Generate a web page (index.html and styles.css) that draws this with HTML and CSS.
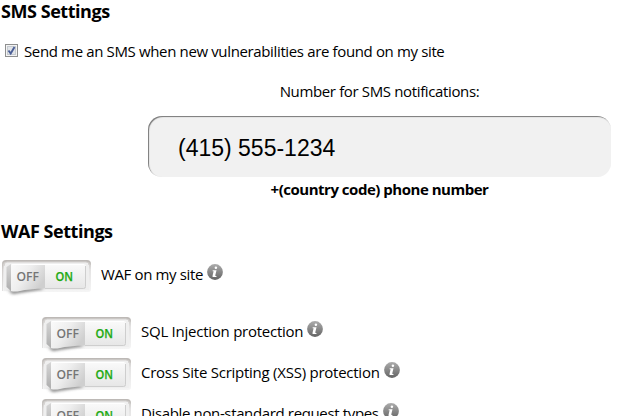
FILE: index.html
```html
<!DOCTYPE html>
<html lang="en">
<head>
<meta charset="utf-8">
<title>Settings</title>
<link rel="stylesheet" href="styles.css">
</head>
<body>
<svg class="defs" width="0" height="0" aria-hidden="true">
  <defs>
    <linearGradient id="frame" x1="0" y1="0" x2="0" y2="1"><stop offset="0" stop-color="#bcb8b5"/><stop offset=".12" stop-color="#d0cecc"/><stop offset=".3" stop-color="#e4e3e3"/><stop offset="1" stop-color="#f5f5f5"/></linearGradient>
    <linearGradient id="edge" x1="0" y1="0" x2="0" y2="32" gradientUnits="userSpaceOnUse"><stop offset="0" stop-color="#bab6b3"/><stop offset=".3" stop-color="#d2cfcd"/><stop offset="1" stop-color="#e2e2e2"/></linearGradient>
    <linearGradient id="side" x1="0" y1="0" x2="0" y2="1"><stop offset="0" stop-color="#d6d6d6"/><stop offset="1" stop-color="#adadad"/></linearGradient>
    <linearGradient id="off" x1="0" y1="0" x2="1" y2=".55"><stop offset="0" stop-color="#fbfbfb"/><stop offset=".5" stop-color="#eeeeee"/><stop offset="1" stop-color="#cfcfcf"/></linearGradient>
    <linearGradient id="on" x1="0" y1="0" x2="0" y2="1"><stop offset="0" stop-color="#fafafa"/><stop offset="1" stop-color="#e6e6e6"/></linearGradient>
    <linearGradient id="ball" x1="0" y1="0" x2="0" y2="1"><stop offset="0" stop-color="#acacac"/><stop offset="1" stop-color="#646464"/></linearGradient>
    <filter id="soft" x="-30%" y="-100%" width="160%" height="300%"><feGaussianBlur stdDeviation="1.7"/></filter>
    <symbol id="toggle" viewBox="0 0 92 40">
      <path d="M2 31V4a4 4 0 0 1 4-4h81a4 4 0 0 1 4 4v25a3 3 0 0 1-3 3H45L12 32z" fill="url(#frame)"/>
      <path d="M4 31V5q0-3 3-3h79q3 0 3 3v25H44L12 31z" fill="#efefef"/>
      <path d="M2.500 31V4.500Q2.500 1 6 1h81q3.500 0 3.500 3.500" fill="none" stroke="url(#edge)"/>
      <path d="M4 6q0-4 3-4h79q3 0 3 3" fill="none" stroke="#d3d0ce"/>
      <path d="M8 31l5 3 31-5-5-2z" fill="#666" opacity=".8" filter="url(#soft)"/>
      <path d="M6.500 7L11 4v27l-4.500-4z" fill="url(#side)"/>
      <path d="M11 5q0-1 1-1h33v24.500Q28 29 20 31q-5 1-9 0z" fill="url(#off)"/>
      <path d="M45 4h39q2 0 2 2v21q0 2-2 2H45z" fill="url(#on)"/>
      <path d="M45 28.500h38.500q2 0 2-2V6" fill="none" stroke="#cecece"/>
      <path d="M12 4.500h72" stroke="#fff"/>
      <text x="16.500" y="21" class="off-text" textLength="22.500" lengthAdjust="spacingAndGlyphs">OFF</text>
      <text x="55.500" y="21" class="on-text" textLength="17.500" lengthAdjust="spacingAndGlyphs">ON</text>
    </symbol>
    <symbol id="info" viewBox="0 0 16 16">
      <circle cx="8" cy="8" r="7.900" fill="url(#ball)"/>
      <circle cx="8.900" cy="3.700" r="1.250" fill="#fff"/>
      <path d="M5.700 6.300h3.800L8.300 11.300q-.1.600.4.600h.9l-.3 1H6q-.7 0-.5-.9l1.100-4.700h-1z" fill="#fff"/>
    </symbol>
  </defs>
</svg>
<main class="page">
  <h2 class="heading heading-sms">SMS Settings</h2>
  <label class="check-row">
    <svg class="box" viewBox="0 0 13 13"><rect x=".5" y=".5" width="12" height="12" fill="#f4f4f4" stroke="#8e8f8f"/><rect x="2.500" y="2.500" width="8" height="8" fill="#e1e4e8" stroke="#c5cad0"/><path d="M3.500 6.500l2.200 3L9.500 3" fill="none" stroke="#4b5f97" stroke-width="1.900"/></svg>
    <span>Send me an SMS when new vulnerabilities are found on my site</span>
  </label>
  <section class="phone">
    <span class="phone-label">Number for SMS notifications:</span>
    <div class="field">(415) 555-1234</div>
    <strong class="hint">+(country code) phone number</strong>
  </section>
  <h2 class="heading heading-waf">WAF Settings</h2>
  <div class="row"><svg class="toggle"><use href="#toggle"/></svg><span>WAF on my site</span><svg class="info"><use href="#info"/></svg></div>
  <div class="children">
    <div class="row"><svg class="toggle"><use href="#toggle"/></svg><span class="wide">SQL Injection protection</span><svg class="info"><use href="#info"/></svg></div>
    <div class="row"><svg class="toggle"><use href="#toggle"/></svg><span class="wide">Cross Site Scripting (XSS) protection</span><svg class="info"><use href="#info"/></svg></div>
    <div class="row"><svg class="toggle"><use href="#toggle"/></svg><span>Disable non-standard request types</span><svg class="info"><use href="#info"/></svg></div>
  </div>
</main>
</body>
</html>
```
FILE: styles.css
```css
body { margin: 0; background: #fff; color: #000; overflow: hidden; }
.page { height: 416px; overflow: hidden; font: 15px/24px "Open Sans", "Noto Sans", sans-serif; letter-spacing: -0.36px; white-space: nowrap; }
.defs { position: absolute; }
.heading { margin: 0; padding-left: 1px; font-size: 18px; line-height: 24px; font-weight: 700; letter-spacing: -0.45px; }
.heading-sms { margin-top: -1px; }
.check-row { display: flex; align-items: center; gap: 6px; margin-top: 16px; padding-left: 5px; height: 24px; }
.box { width: 13px; height: 13px; flex: none; margin-top: -2px; }
.phone { display: flex; flex-direction: column; align-items: center; width: 463px; margin: 16px 0 0 148px; }
.phone-label { height: 24px; }
.field { box-sizing: border-box; width: 463px; height: 61px; margin-top: 13px; padding-left: 30px; border-radius: 14px; background: #f1f1f1; box-shadow: inset 1px 1px 1px #777; font: 23px/64px "Liberation Sans", Arial, sans-serif; letter-spacing: 0; }
.hint { height: 24px; font-weight: 700; letter-spacing: -0.48px; }
.heading-waf { margin-top: 18px; }
.row { display: flex; align-items: flex-start; height: 41px; }
.heading-waf + .row { height: 57px; margin-top: 17px; }
.children { padding-left: 40px; }
.toggle { width: 92px; height: 40px; flex: none; margin-right: 9px; }
.row > span { margin-top: 2px; }
.row > .wide { letter-spacing: -0.25px; }
.info { width: 16px; height: 16px; margin: 4px 0 0 4px; flex: none; }
.off-text, .on-text { font: 600 12px "Open Sans", sans-serif; letter-spacing: 0; }
.off-text { fill: #757575; }
.on-text { fill: #1eaa14; stroke: #1eaa14; stroke-width: .25; }
```
